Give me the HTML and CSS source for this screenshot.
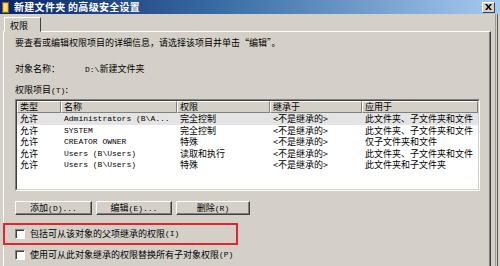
FILE: index.html
```html
<!DOCTYPE html>
<html lang="zh-CN">
<head>
  <meta charset="UTF-8" />
  <title>新建文件夹 的高级安全设置</title>
  <link rel="stylesheet" href="styles.css">
</head>
<body>
  <div class="titlebar">
    <svg class="folder" width="8" height="11" viewBox="0 0 8 11">
      <rect x="0.5" y="0.5" width="6" height="10" fill="#f3c443" stroke="#8a6a10"/>
      <rect x="2" y="2" width="3" height="7" fill="#fbe38a"/>
    </svg>
    <span class="title">新建文件夹 的高级安全设置</span>
    <span class="close">
      <svg width="7" height="6" viewBox="0 0 7 6"><path d="M0 0h2l1.5 2 1.5-2h2l-2.5 3 2.5 3h-2l-1.5-2-1.5 2h-2l2.5-3z" fill="#000"/></svg>
    </span>
  </div>

  <div class="client">
    <div class="tabs"><div class="tab">权限</div></div>

    <div class="panel">
      <p class="intro">要查看或编辑权限项目的详细信息，请选择该项目并单击“编辑”。</p>

      <div class="field">
        <span class="label">对象名称：</span>
        <span class="value"><span class="m">D:\</span>新建文件夹</span>
      </div>

      <div class="caption">权限项目<span class="m">(T)</span>:</div>

      <div class="list">
        <div class="list-inner">
          <div class="row head">
            <span>类型</span><span>名称</span><span>权限</span><span>继承于</span><span>应用于</span>
          </div>
          <div class="row sel">
            <span>允许</span><span class="m">Administrators (B\A...</span><span>完全控制</span><span>&lt;不是继承的&gt;</span><span>此文件夹、子文件夹和文件</span>
          </div>
          <div class="row">
            <span>允许</span><span class="m">SYSTEM</span><span>完全控制</span><span>&lt;不是继承的&gt;</span><span>此文件夹、子文件夹和文件</span>
          </div>
          <div class="row">
            <span>允许</span><span class="m">CREATOR OWNER</span><span>特殊</span><span>&lt;不是继承的&gt;</span><span>仅子文件夹和文件</span>
          </div>
          <div class="row">
            <span>允许</span><span class="m">Users (B\Users)</span><span>读取和执行</span><span>&lt;不是继承的&gt;</span><span>此文件夹、子文件夹和文件</span>
          </div>
          <div class="row">
            <span>允许</span><span class="m">Users (B\Users)</span><span>特殊</span><span>&lt;不是继承的&gt;</span><span>此文件夹和子文件夹</span>
          </div>
        </div>
      </div>

      <div class="buttons">
        <button class="btn w1">添加<span class="m">(D)...</span></button>
        <button class="btn w2">编辑<span class="m">(E)...</span></button>
        <button class="btn w3">删除<span class="m">(R)</span></button>
      </div>

      <div class="mark">
        <div class="check"><span class="box"></span>包括可从该对象的父项继承的权限<span class="m">(I)</span></div>
      </div>
      <div class="check second"><span class="box"></span>使用可从此对象继承的权限替换所有子对象权限<span class="m">(P)</span></div>
    </div>
  </div>
</body>
</html>
```

FILE: styles.css
```css
body {
  margin: 0;
  width: 500px;
  height: 266px;
  overflow: hidden;
  background: #d4d0c8;
  font-family: "Noto Sans CJK SC", sans-serif;
  font-size: 9px;
  color: #000;
}

.m {
  font-family: "Liberation Mono", monospace;
  font-size: 8px;
}

.titlebar {
  height: 14px;
  display: flex;
  align-items: center;
  background: linear-gradient(to right, #0a246a, #3a6ea5 45%, #a6caf0);
  color: #fff;
}

.folder {
  margin-left: 2px;
  margin-right: 4px;
}

.title {
  font-weight: bold;
  font-size: 10px;
  line-height: 14px;
  letter-spacing: 0.3px;
}

.close {
  margin-left: auto;
  margin-right: 5px;
  width: 11px;
  height: 9px;
  background: #d4d0c8;
  border: 1px solid;
  border-color: #fff #404040 #404040 #fff;
  display: flex;
  align-items: center;
  justify-content: center;
}

.client {
  height: 252px;
  margin-right: 2px;
  border-right: 1px solid #5a5a5a;
  box-shadow: inset -1px 0 #d4d0c8, inset -2px 0 #9a9a9a;
}

.tabs {
  padding: 3px 0 0 4px;
  display: flex;
}

.tab {
  position: relative;
  height: 15px;
  width: 37px;
  padding-left: 5px;
  box-sizing: border-box;
  line-height: 15px;
  background: #d4d0c8;
  border: 1px solid;
  border-color: #fff #404040 transparent #fff;
  margin-bottom: -1px;
}

.panel {
  margin-left: 3px;
  width: 488px;
  box-sizing: border-box;
  height: 240px;
  padding: 5px 0 0 11px;
  border-top: 1px solid #fff;
  border-left: 1px solid #fff;
  border-right: 1px solid #404040;
  box-shadow: inset -1px 0 #808080;
}

.intro {
  margin: 0;
  line-height: 12px;
}

.field {
  margin-top: 14px;
  line-height: 12px;
  display: flex;
}

.label {
  width: 70px;
}

.caption {
  margin-top: 8px;
  line-height: 12px;
}

.list {
  margin-top: 2px;
  width: 465px;
  height: 92px;
  box-sizing: border-box;
  border: 1px solid;
  border-color: #808080 #fff #fff #808080;
}

.list-inner {
  height: 100%;
  box-sizing: border-box;
  border: 1px solid;
  border-color: #404040 #d4d0c8 #d4d0c8 #404040;
  background: #fff;
}

.row {
  display: grid;
  grid-template-columns: 44px 116px 93px 92px 116px;
  height: 11.5px;
  line-height: 11.5px;
  white-space: nowrap;
}

.row span {
  padding-left: 3px;
  overflow: hidden;
}

.row.head {
  height: 12px;
  line-height: 10px;
}

.row.head span {
  background: #d4d0c8;
  border: 1px solid;
  border-color: #fff #808080 #808080 #fff;
  padding-left: 2px;
}

.row.sel {
  background: #e4e4e4;
}

.buttons {
  margin-top: 10px;
  display: flex;
  gap: 4px;
}

.btn {
  height: 14px;
  padding: 0;
  font-family: inherit;
  font-size: 9px;
  line-height: 12px;
  color: #000;
  background: #d4d0c8;
  border: 1px solid;
  border-color: #fff #404040 #404040 #fff;
  box-shadow: inset -1px -1px #808080;
}

.w1 { width: 77px; }
.w2 { width: 76px; }
.w3 { width: 74px; }

.mark {
  margin-top: 8px;
  margin-left: -12px;
  width: 235px;
  box-sizing: border-box;
  border: 2px solid #e3262c;
  padding: 3px 0 3px 10px;
}

.check {
  display: flex;
  align-items: center;
  line-height: 12px;
}

.check.second {
  margin-top: 4px;
}

.box {
  width: 8px;
  height: 8px;
  margin-right: 5px;
  background: #fff;
  border: 1px solid;
  border-color: #808080 #fff #fff #808080;
  box-shadow: inset 1px 1px #404040;
}
```
